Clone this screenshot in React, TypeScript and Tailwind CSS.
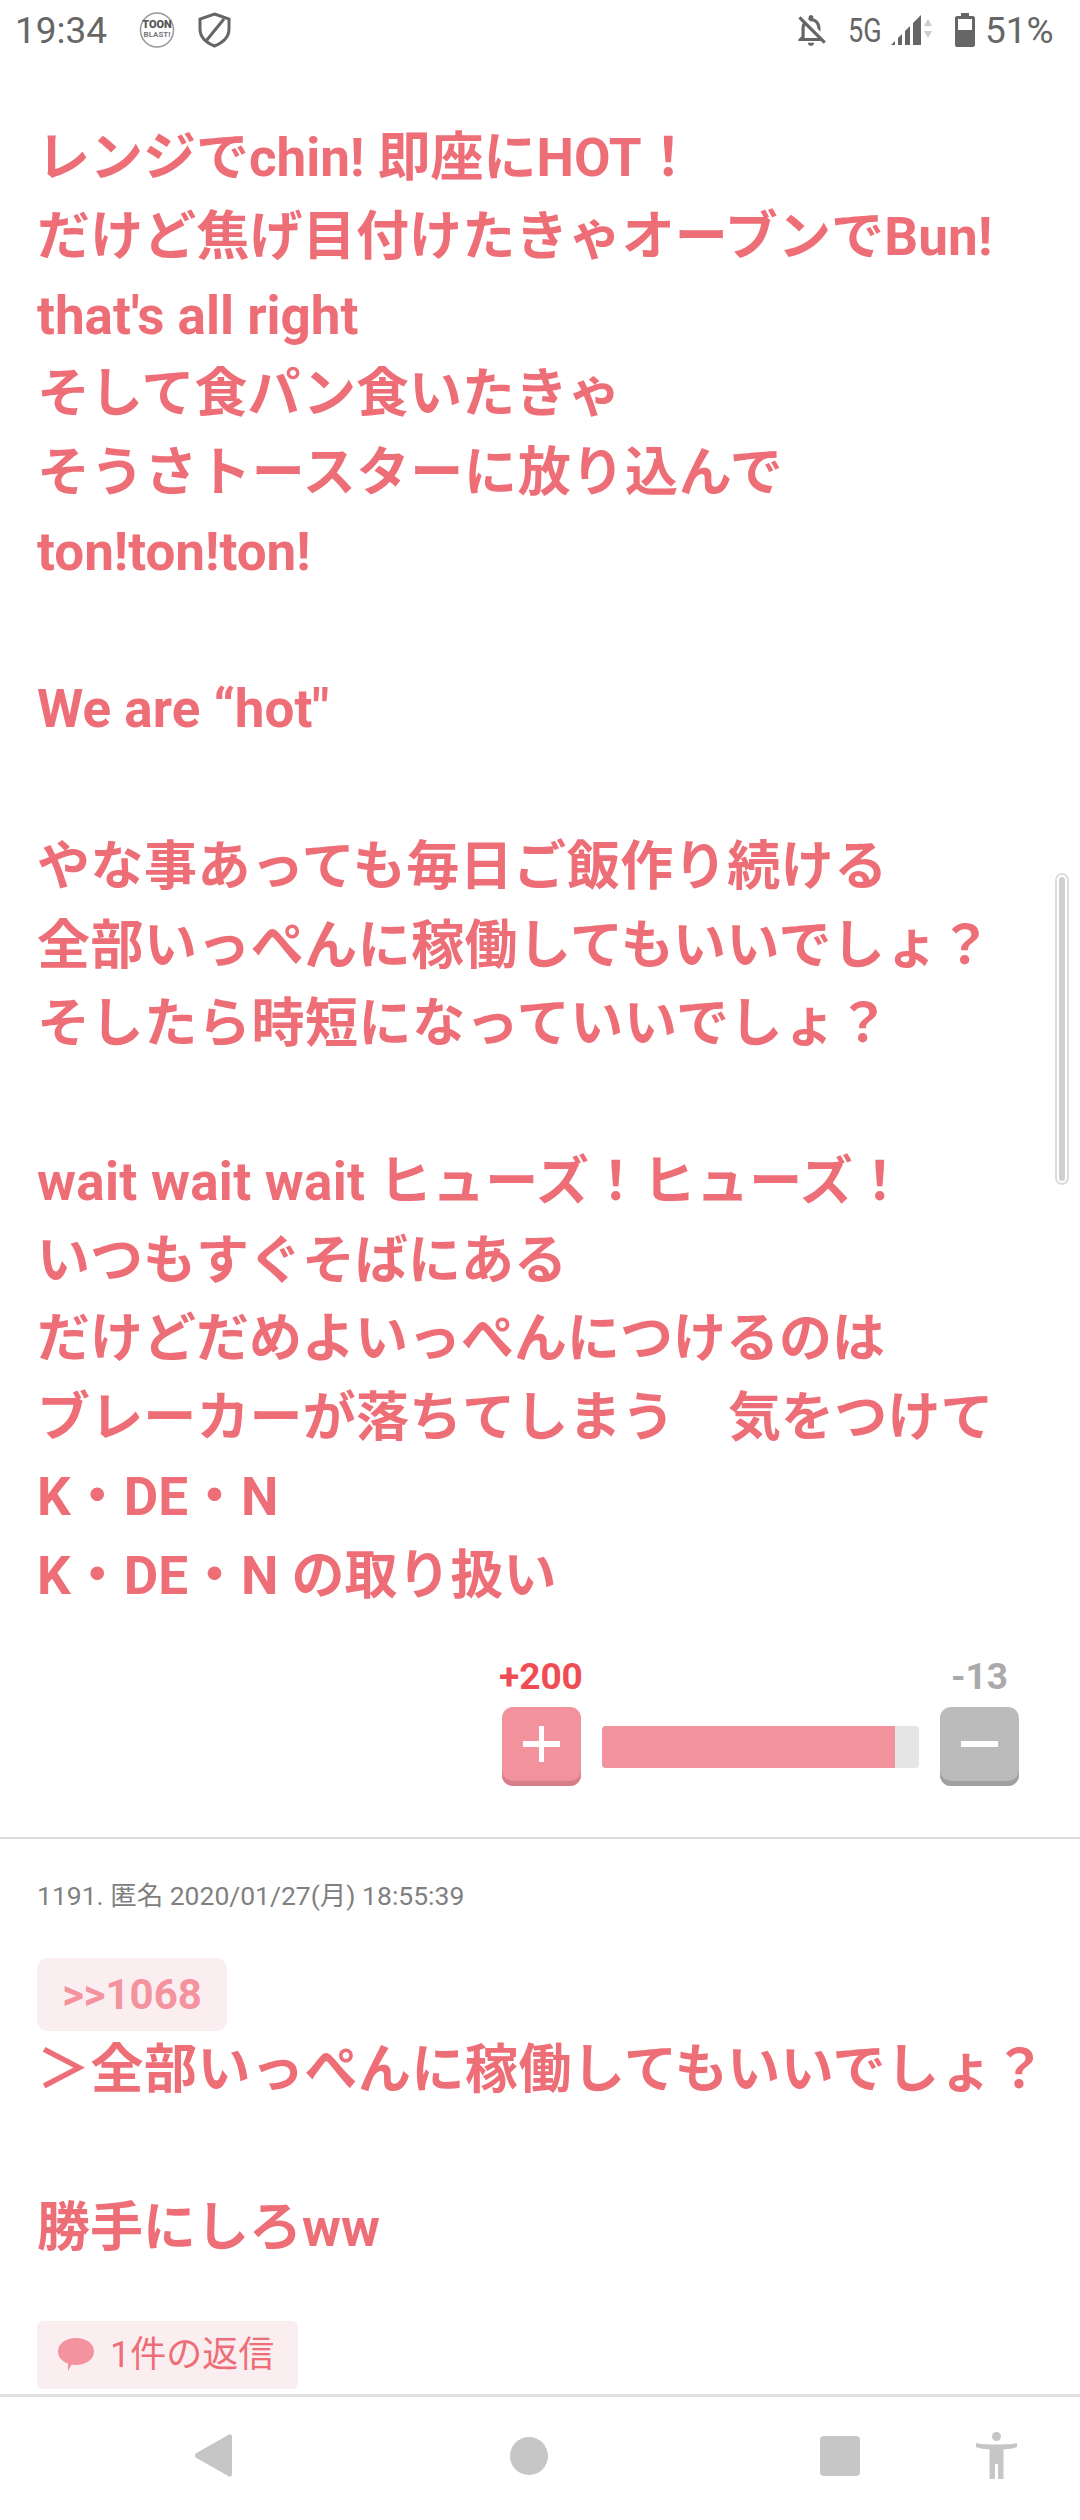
import { MdOutlineNotificationsOff } from 'react-icons/md';

// tracking is per line: a few lines run slightly wider in the reference
const lines = [
  { text: 'レンジでchin! 即座にHOT！' },
  { text: 'だけど焦げ目付けたきゃオーブンでBun!', className: 'tracking-[0.15px]' },
  { text: "that's all right" },
  { text: 'そして食パン食いたきゃ' },
  { text: 'そうさトースターに放り込んで', className: 'tracking-[0.7px]' },
  { text: 'ton!ton!ton!' },
  { text: '' },
  { text: 'We are “hot"' },
  { text: '' },
  { text: 'やな事あっても毎日ご飯作り続ける', className: 'tracking-[0.5px]' },
  { text: '全部いっぺんに稼働してもいいでしょ？', className: 'tracking-[0.45px]' },
  { text: 'そしたら時短になっていいでしょ？', className: 'tracking-[0.6px]' },
  { text: '' },
  { text: 'wait wait wait ヒューズ！ヒューズ！', className: 'tracking-[0.3px]' },
  { text: 'いつもすぐそばにある' },
  { text: 'だけどだめよいっぺんにつけるのは' },
  { text: 'ブレーカーが落ちてしまう　気をつけて', className: 'tracking-[0.15px]' },
  { text: 'K・DE・N' },
  { text: 'K・DE・N の取り扱い' },
];

const replyLines = [
  { text: '＞全部いっぺんに稼働してもいいでしょ？', className: 'tracking-[0.5px]' },
  { text: '' },
  { text: '勝手にしろww' },
];

function PostText({ items }: { items: { text: string; className?: string }[] }) {
  return (
    <div className="text-[53px] leading-[78.75px] font-bold text-[#ee6e77] whitespace-nowrap">
      {items.map((line, i) => (
        <div key={i} className={`h-[78.75px] ${line.className ?? ''}`}>
          {line.text}
        </div>
      ))}
    </div>
  );
}

function StatusBar() {
  return (
    <div className="h-[60px] flex items-center pl-[15px] text-[#666] text-[37px] leading-none">
      <span className="w-[93px] pt-[1px]">19:34</span>
      <svg className="ml-[31px]" width="36" height="36" viewBox="0 0 36 36">
        <ellipse cx="18" cy="18" rx="16.5" ry="17" fill="#fff" stroke="#999" strokeWidth="1.5" />
        <text x="18" y="16" textAnchor="middle" fontSize="11" fontWeight="900" fill="#555">TOON</text>
        <text x="18" y="25" textAnchor="middle" fontSize="8" fontWeight="700" fill="#777">BLAST!</text>
      </svg>
      <svg className="ml-[23px]" width="33" height="36" viewBox="0 0 33 36" fill="none" stroke="#666" strokeWidth="3">
        <path d="M16.5 2 L31 7 V17 C31 26 24 31 16.5 34 C9 31 2 26 2 17 V7 Z" />
        <path d="M8 29 L26 7" />
      </svg>
      <MdOutlineNotificationsOff className="ml-[561px] text-[38px]" />
      <span className="ml-[18px] text-[33px] scale-x-[0.82] origin-left w-[42px]">5G</span>
      <svg width="44" height="32" viewBox="0 0 44 32" fill="#666">
        <path d="M1 31 L5 27 V31 Z" />
        <path d="M8 31 V24 L12 20 V31 Z" />
        <path d="M15 31 V17 L20 12 V31 Z" />
        <path d="M23 31 V9 L31 1 V31 Z" />
        <path d="M34 12 L38 5 L42 12 Z" fill="#ccc" />
        <path d="M34 17 L38 24 L42 17 Z" fill="#ccc" />
      </svg>
      <svg className="ml-[21px]" width="20" height="34" viewBox="0 0 20 34" fill="#666">
        <path d="M6 0 H14 V3 H18 C19 3 20 4 20 5 V32 C20 33 19 34 18 34 H2 C1 34 0 33 0 32 V5 C0 4 1 3 2 3 H6 Z" />
        <rect x="3" y="6" width="14" height="11" fill="#fff" />
      </svg>
      <span className="ml-[10px] pt-[1px]">51%</span>
    </div>
  );
}

function VoteButton({ kind }: { kind: 'plus' | 'minus' }) {
  const plus = kind === 'plus';
  return (
    <div
      className={`relative w-[79px] h-[79px] rounded-[11px] ${
        plus ? 'bg-[#f2929c] shadow-[inset_0_-5px_0_#d77f89]' : 'bg-[#bbbbbb] shadow-[inset_0_-5px_0_#a0a0a0]'
      }`}
    >
      <div className="absolute left-[21px] top-[34px] w-[37px] h-[6px] bg-white" />
      {plus && <div className="absolute left-[37px] top-[19px] w-[5px] h-[36px] bg-white" />}
    </div>
  );
}

function Rating() {
  return (
    <div className="pr-[61px] pt-[37px] flex flex-col items-end">
      <div className="w-[517px] flex justify-between text-[37px] leading-[50px] font-bold text-center">
        <span className="w-[79px] -ml-[3px] text-[#ef4c54]">+200</span>
        <span className="w-[79px] text-[#aaaaaa]">-13</span>
      </div>
      <div className="mt-[5px] flex gap-[21px]">
        <VoteButton kind="plus" />
        <div className="mt-[19px] w-[317px] h-[42px] rounded-[4px] bg-[#e5e5e5] overflow-hidden">
          <div className="w-[293px] h-full bg-[#f2929c]" />
        </div>
        <VoteButton kind="minus" />
      </div>
    </div>
  );
}

function BottomNav() {
  return (
    <div className="h-[126px] border-t-[3px] border-[#e0e0e0] flex items-center pl-[195px] bg-white pb-[6px]">
      <svg width="37" height="43" viewBox="0 0 37 43" fill="#c6c6c6">
        <path d="M34 0.5 C36 0 37 1 37 3 V40 C37 42 36 43 34 42.5 L1.5 24 C-0.5 23 -0.5 20 1.5 19 Z" />
      </svg>
      <div className="ml-[278px] w-[38px] h-[38px] rounded-full bg-[#c6c6c6]" />
      <div className="ml-[272px] w-[40px] h-[40px] rounded-[4px] bg-[#c6c6c6]" />
      <svg className="ml-[116px]" width="41" height="47" viewBox="0 0 41 47" fill="#c6c6c6">
        <ellipse cx="20.5" cy="4.5" rx="4.5" ry="4.5" />
        <path d="M0 11 C7 13 34 13 41 11 V15 C37 16.5 33 17 27.5 17.5 V47 H22 V32 H19 V47 H13.5 V17.5 C8 17 4 16.5 0 15 Z" />
      </svg>
    </div>
  );
}

export default function App() {
  return (
    <div className="relative h-[2520px] w-[1080px] overflow-hidden bg-white flex flex-col font-['Roboto','Noto_Sans_CJK_JP',sans-serif]">
      <StatusBar />

      <div className="flex-1 overflow-hidden">
        <div className="pt-[59px] pl-[37px]">
          <PostText items={lines} />
        </div>

        <Rating />

        <div className="mt-[51px] border-t-2 border-[#dddddd] pt-[41px] pl-[37px]">
          <div className="text-[26.5px] leading-[32px] text-[#808080]">1191. 匿名 2020/01/27(月) 18:55:39</div>

          <div className="mt-[46px] w-[190px] h-[73px] rounded-[11px] bg-[#fbeef1] text-[42px] leading-[73px] font-bold text-[#f4929e] text-center">
            &gt;&gt;1068
          </div>

          <PostText items={replyLines} />

          <div className="mt-[53px] w-[261px] h-[68px] rounded-[6px] bg-[#fbeef1] flex items-center pl-[21px]">
            <svg width="36" height="33" viewBox="0 0 36 33" fill="#f4929e">
              <path d="M18 0 C28 0 36 5.5 36 13.5 C36 21.5 28 27 18 27 C16.5 27 15 26.9 13.7 26.6 L10 33 L10 25.5 C4 23.5 0 19 0 13.5 C0 5.5 8 0 18 0 Z" />
            </svg>
            <span className="ml-[16px] text-[36px] leading-none text-[#ee6e77]">1件の返信</span>
          </div>
        </div>
      </div>

      <BottomNav />

      {/* scrollbar overlay */}
      <div className="absolute left-[1055px] top-[873px] w-[14px] h-[312px] rounded-full border-2 border-[#dcdcdc] bg-white flex justify-center p-[2px]">
        <div className="w-[6px] h-full rounded-full bg-[#d0d0d0]" />
      </div>
    </div>
  );
}
